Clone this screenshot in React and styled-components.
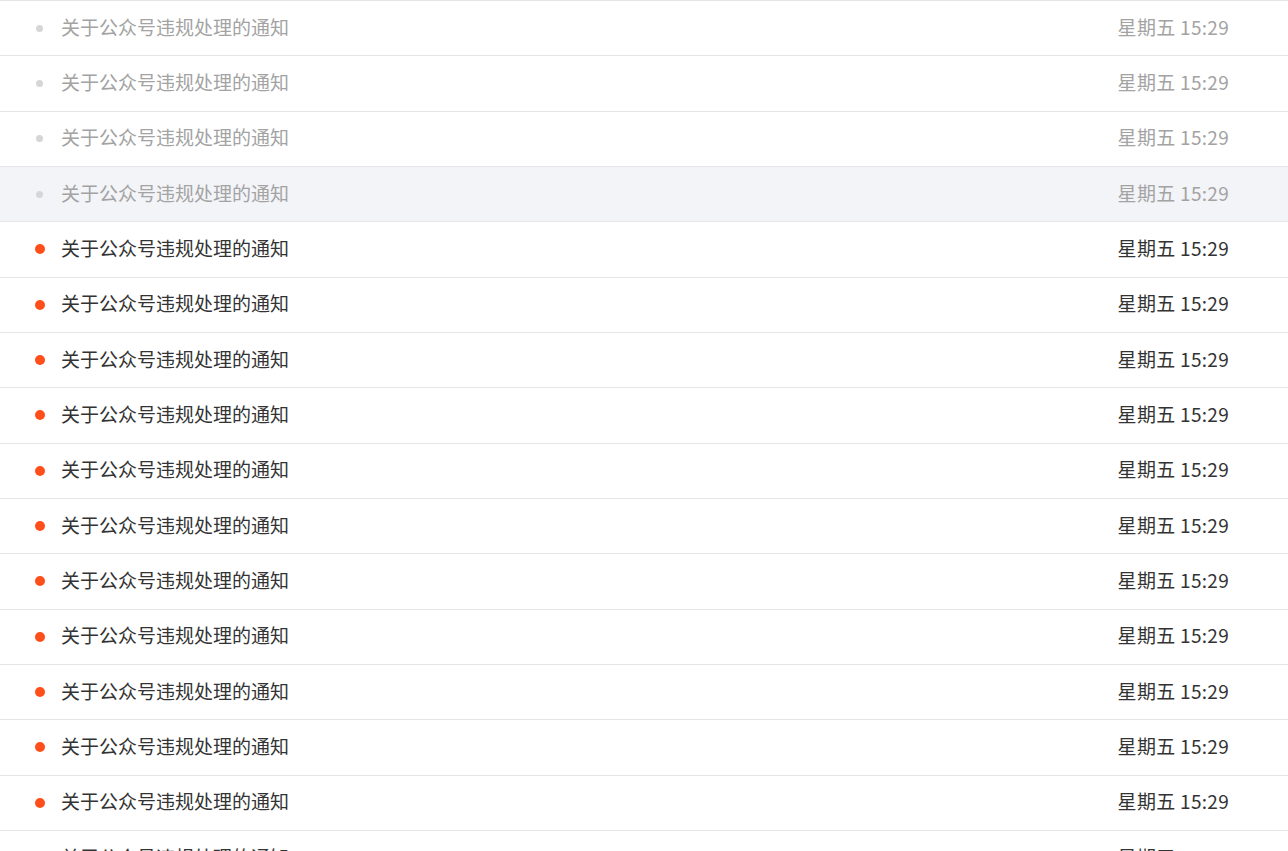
import { createGlobalStyle, styled } from "styled-components";

const GlobalStyle = createGlobalStyle`
  html, body {
    margin: 0;
    padding: 0;
    background: #fff;
  }
  body {
    font-family: "Noto Sans CJK SC", "Noto Sans", sans-serif;
  }
`;

const List = styled.ul`
  list-style: none;
  margin: 0;
  padding: 0;
  width: 100%;
`;

const Row = styled.li`
  box-sizing: border-box;
  display: flex;
  align-items: center;
  height: 55.33px;
  padding: 0 59px 0 34px;
  border-top: 1px solid #e6e6e8;
  background-color: ${({ $active }) => ($active ? "#f3f4f8" : "#fff")};
  color: ${({ $read }) => ($read ? "#a3a3a3" : "#333")};
  font-size: 19px;
  cursor: pointer;
`;

const DotBox = styled.span`
  display: flex;
  align-items: center;
  justify-content: center;
  width: 11px;
  margin-right: 16px;
`;

const Dot = styled.span`
  display: block;
  width: ${({ $read }) => ($read ? "7px" : "10px")};
  height: ${({ $read }) => ($read ? "7px" : "10px")};
  border-radius: 50%;
  background-color: ${({ $read }) => ($read ? "#d6d6d8" : "#fe4f1b")};
`;

const Title = styled.span`
  flex: 1;
  white-space: nowrap;
  padding-bottom: 4px;
`;

const Time = styled.span`
  white-space: nowrap;
  letter-spacing: 0.3px;
  padding-bottom: 4px;
`;

const messages = Array.from({ length: 18 }, (_, i) => ({
  id: i,
  title: "关于公众号违规处理的通知",
  time: "星期五 15:29",
  read: i < 4,
}));

export default function App() {
  return (
    <>
      <GlobalStyle />
      <List>
        {messages.map((m) => (
          <Row key={m.id} $read={m.read} $active={m.id === 3}>
            <DotBox>
              <Dot $read={m.read} />
            </DotBox>
            <Title>{m.title}</Title>
            <Time>{m.time}</Time>
          </Row>
        ))}
      </List>
    </>
  );
}
